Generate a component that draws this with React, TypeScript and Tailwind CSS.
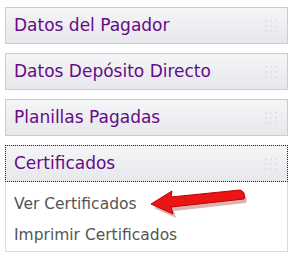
const headers = ["Datos del Pagador", "Datos Depósito Directo", "Planillas Pagadas"];

function Grip() {
  return (
    <div className="grid grid-cols-3 gap-[3px]">
      {Array.from({ length: 9 }).map((_, i) => (
        <span key={i} className="block w-[2px] h-[2px] bg-[#e0e2e6]" />
      ))}
    </div>
  );
}

function Header({ title, active }: { title: string; active?: boolean }) {
  return (
    <div
      className={
        "h-[37px] flex items-center justify-between pl-[8px] pr-[10px] bg-gradient-to-b from-[#f4f5f7] to-[#e6e8eb] " +
        (active ? "border border-dotted border-[#222]" : "border border-[#c9ccd0]")
      }
    >
      <span className="text-[17px] text-[#660a88]">{title}</span>
      <Grip />
    </div>
  );
}

export default function App() {
  return (
    <div
      className="w-[296px] h-[267px] bg-white pt-[7px] pl-[5px] pr-[8px]"
      style={{ fontFamily: "Tahoma, 'DejaVu Sans', sans-serif" }}
    >
      <div className="flex flex-col gap-[9px]">
        {headers.map((h) => (
          <Header key={h} title={h} />
        ))}
        <div>
          <Header title="Certificados" active />
          <div className="relative border border-t-0 border-[#dcdcdc] h-[70px] pl-[8px] pt-[11px] flex flex-col gap-[8px] text-[15.5px] text-[#555]">
            <span>Ver Certificados</span>
            <span>Imprimir Certificados</span>
            <svg className="absolute left-[140px] top-[3px]" width="104" height="34" viewBox="0 0 104 34">
              <path d="M7 21 L28 8 L27 14 L95 7 Q102 9 99 16 L27 24 L29 31 Z" fill="#900000" opacity="0.3" transform="translate(1,2)" />
              <path d="M5 19 L26 6 L25 12 L94 5 Q100 7 98 14 L25 22 L27 29 Z" fill="#ec1515" stroke="#c00000" strokeWidth="1" strokeLinejoin="round" />
            </svg>
          </div>
        </div>
      </div>
    </div>
  );
}
